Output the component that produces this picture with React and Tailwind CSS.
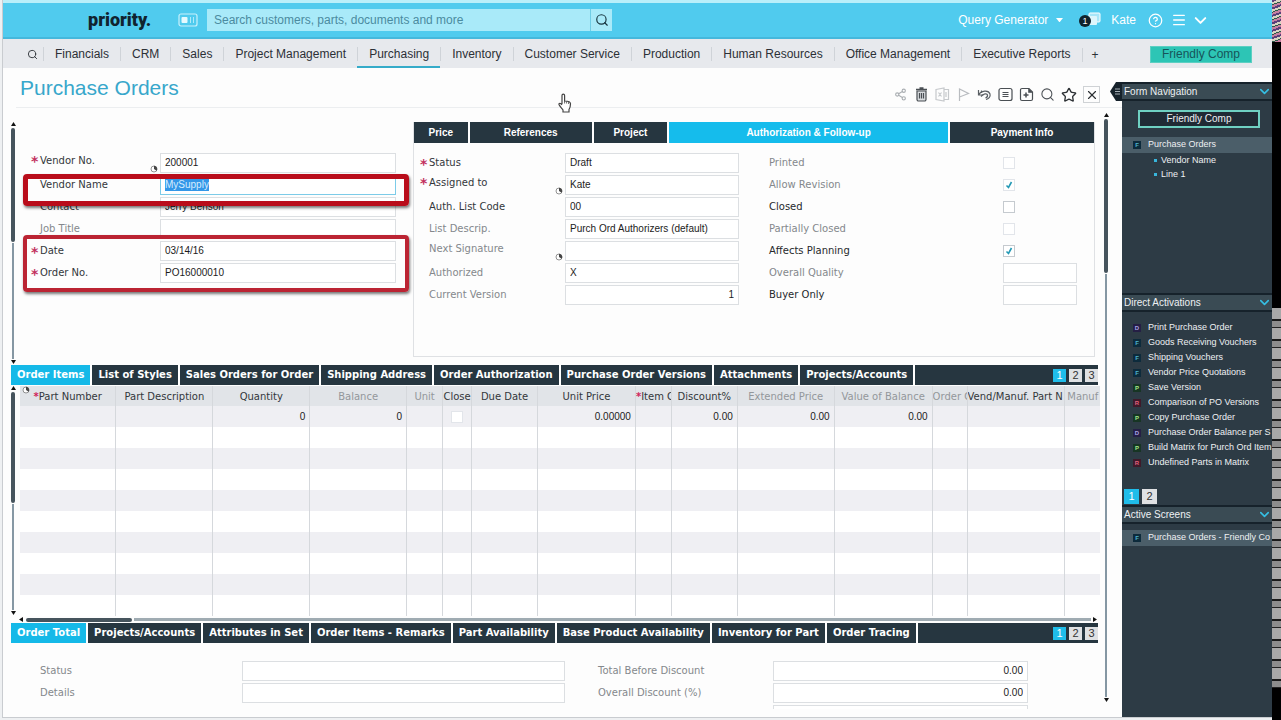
import { useId } from 'react'
import clsx      from 'clsx'
import { Search, Share2, Star, X, ChevronDown, CircleHelp, Menu } from 'lucide-react'

const MODULES = [
  'Financials', 'CRM', 'Sales', 'Project Management', 'Purchasing', 'Inventory',
  'Customer Service', 'Production', 'Human Resources', 'Office Management', 'Executive Reports',
]

const ITEM_TABS = [
  'Order Items', 'List of Styles', 'Sales Orders for Order', 'Shipping Address',
  'Order Authorization', 'Purchase Order Versions', 'Attachments', 'Projects/Accounts',
]

const TOTAL_TABS = [
  'Order Total', 'Projects/Accounts', 'Attributes in Set', 'Order Items - Remarks',
  'Part Availability', 'Base Product Availability', 'Inventory for Part', 'Order Tracing',
]

const COLUMNS = [
  { name: 'Part Number', width: 96, required: true },
  { name: 'Part Description', width: 97 },
  { name: 'Quantity', width: 97, value: '0' },
  { name: 'Balance', width: 97, value: '0', muted: true },
  { name: 'Unit', width: 36, muted: true },
  { name: 'Close', width: 29, check: true },
  { name: 'Due Date', width: 66 },
  { name: 'Unit Price', width: 98, value: '0.00000' },
  { name: 'Item C', width: 36, required: true, cut: true },
  { name: 'Discount%', width: 66, value: '0.00' },
  { name: 'Extended Price', width: 97, value: '0.00', muted: true },
  { name: 'Value of Balance', width: 98, value: '0.00', muted: true },
  { name: 'Order C', width: 35, muted: true, cut: true },
  { name: 'Vend/Manuf. Part N', width: 98, cut: true },
  { name: 'Manuf', width: 35, muted: true },
]

const ACTIVATIONS = [
  ['D', 'Print Purchase Order'],
  ['F', 'Goods Receiving Vouchers'],
  ['F', 'Shipping Vouchers'],
  ['F', 'Vendor Price Quotations'],
  ['P', 'Save Version'],
  ['R', 'Comparison of PO Versions'],
  ['P', 'Copy Purchase Order'],
  ['D', 'Purchase Order Balance per S'],
  ['P', 'Build Matrix for Purch Ord Item'],
  ['R', 'Undefined Parts in Matrix'],
]

const KIND_COLORS = {
  D: 'bg-[#251f45] text-[#a9a2e6]',
  F: 'bg-[#0d2b3c] text-[#4fb4cf]',
  P: 'bg-[#173524] text-[#a5ea8a]',
  R: 'bg-[#3f1a2a] text-[#e0607c]',
}

const LABEL_FONT = "font-['DejaVu_Sans',Verdana,sans-serif]"

// Small pie-clock shown beside fields that keep a history
function ClockMark() {
  return (
    <svg viewBox="0 0 8 8" className="size-2 shrink-0" aria-hidden="true">
      <circle cx="4" cy="4" r="3" fill="#fff" stroke="#777" strokeWidth=".8" />
      <path d="M4 4V.8A3.2 3.2 0 0 1 6.6 5.8Z" fill="#444" />
    </svg>
  )
}

function Arrow({ dir, className }) {
  const paths = {
    up: 'M0 4 2.500 0 5 4Z',
    down: 'M0 0 2.500 4 5 0Z',
    left: 'M4 0 0 2.500 4 5Z',
    right: 'M0 0 4 2.500 0 5Z',
  }
  return (
    <svg viewBox="0 0 5 5" className={clsx('size-[5px] shrink-0', className)} aria-hidden="true">
      <path d={paths[dir]} fill="#111" />
    </svg>
  )
}

function VScroll({ thumb }) {
  return (
    <div className="flex w-1 shrink-0 flex-col items-center gap-px">
      <Arrow dir="up" />
      <div className={clsx('w-1 shrink-0 rounded-full bg-[#46545d]', thumb)} />
      <div className="w-0.5 flex-1 bg-[#8597a3]" />
      <Arrow dir="down" />
    </div>
  )
}

function Field({ label, value = '', required, muted, clock, focused, right, labelWidth, wide = 'flex-1' }) {
  const id = useId()
  return (
    <div className="flex h-[22px] items-start">
      <span className={clsx('w-[9px] shrink-0 text-[14px] font-bold text-[#c2315f]', clock ? 'leading-[17px]' : 'leading-[22px]')}>
        {required && '*'}
      </span>
      <div className={clsx('flex h-5 shrink-0 justify-between pr-0.5', labelWidth)}>
        <label
          htmlFor={id}
          className={clsx('whitespace-nowrap text-[10px]', clock ? 'leading-[15px]' : 'leading-5', muted ? 'text-[#84888c]' : 'text-[#33373b]')}
        >
          {label}
        </label>
        {clock && <span className="self-end"><ClockMark /></span>}
      </div>
      <div className={clsx('flex h-5 min-w-0 items-center border bg-white', wide, focused ? 'border-[#7ccbe8]' : 'border-[#dcdfe2]')}>
        <input
          id={id}
          defaultValue={value}
          className={clsx(
            "min-w-0 font-['Liberation_Sans',Arial,sans-serif] text-[10px] leading-3 text-[#1c1c1c] outline-none",
            right ? 'w-full pr-1 text-right' : 'ml-1',
            focused ? 'field-sizing-content bg-[#3397e8] text-[#d6ecff]' : 'w-full',
          )}
        />
      </div>
    </div>
  )
}

function CheckBox({ id, label, checked, muted }) {
  return (
    <span className="relative flex size-3">
      <input
        id={id}
        type="checkbox"
        aria-label={label}
        defaultChecked={checked}
        className={clsx('peer size-3 appearance-none border bg-white', muted ? 'border-[#e2e5ea]' : 'border-[#c5cacf]')}
      />
      <svg viewBox="0 0 12 12" className="pointer-events-none absolute inset-0 hidden size-3 peer-checked:block" aria-hidden="true">
        <path d="M3.500 6.500 5.500 8.500 8.500 3" fill="none" stroke="#2499b5" strokeWidth="1.600" />
      </svg>
    </span>
  )
}

function FlagRow({ label, checked, muted, box }) {
  const id = useId()
  return (
    <div className="flex h-[22px] items-start">
      <label htmlFor={id} className={clsx('flex-1 text-[10px] leading-5', muted ? 'text-[#84888c]' : 'text-[#26292c]')}>
        {label}
      </label>
      <div className="flex h-5 w-[74px] items-center">
        {box
          ? <input id={id} className="h-5 w-full border border-[#dcdfe2] bg-white px-1 text-[10px] outline-none" />
          : <CheckBox id={id} checked={checked} muted={muted} />
        }
      </div>
    </div>
  )
}

function Pager({ pages }) {
  return (
    <div className="flex gap-[3px] font-['Liberation_Sans',Arial,sans-serif]">
      {pages.map((p, i) => (
        <button
          key={p}
          className={clsx('h-[13px] w-[13px] text-[11px] leading-[13px]', i === 0 ? 'bg-[#1fbdea] text-white' : 'bg-[#dfe1e3] text-[#333]')}
        >
          {p}
        </button>
      ))}
    </div>
  )
}

function TabStrip({ tabs }) {
  return (
    <div className="mr-0.5 flex h-5 items-center bg-[#263640]">
      {tabs.map((t, i) => (
        <button
          key={t}
          className={clsx(
            'h-5 whitespace-nowrap border-r-2 border-white px-[6px] text-[10px] font-bold leading-5 text-white',
            i === 0 ? 'bg-[#15b9e8]' : 'bg-[#263640]',
          )}
        >
          {t}
        </button>
      ))}
      <div className="ml-auto">
        <Pager pages={[1, 2, 3]} />
      </div>
    </div>
  )
}

function TopBar() {
  return (
    <header className="flex h-[39px] shrink-0 items-center border-b-2 border-t-[3px] border-b-[#45b8dc] border-t-[#b9effa] bg-[#50cbee] pl-[85px] pr-[62px] text-white">
      <a href="#home" className="w-[66px] font-['Roboto',sans-serif] text-[18px] font-black leading-5 text-[#10232f]">priority.</a>
      <svg viewBox="0 0 20 14" className="ml-6 h-3.5 w-5" fill="none" stroke="#c8f1fc" aria-hidden="true">
        <rect x="1" y="1" width="18" height="12" rx="2" strokeWidth="1.200" />
        <rect x="3.500" y="4" width="6" height="6" rx="1" fill="#e6fafe" stroke="none" />
        <path d="M12.500 4v6M15.500 4v6" strokeWidth=".8" />
      </svg>
      <form className="ml-[9px] flex h-[22px] w-[405px] bg-[#a9eaf9]">
        <input
          aria-label="Search"
          placeholder="Search customers, parts, documents and more"
          className="flex-1 px-[7px] text-[12px] text-[#39788d] outline-none placeholder:text-[#4b8ba0]"
        />
        <button type="button" aria-label="Find" className="flex w-[22px] items-center justify-center border-l border-[#6fcde6]">
          <Search size={14} className="text-[#18353f]" />
        </button>
      </form>
      <div className="ml-auto flex items-center text-[12px]">
        <button className="flex items-center gap-2">
          Query Generator
          <svg viewBox="0 0 8 5" className="w-[7px]" aria-hidden="true"><path d="M0 0h8L4 5Z" fill="#fff" /></svg>
        </button>
        <button aria-label="Messages" className="ml-[15px] flex items-center">
          <svg viewBox="0 0 24 16" className="h-4 w-6" aria-hidden="true">
            <rect x="11" y="1" width="11" height="9" rx="1" fill="#a8e6f8" stroke="#fff" />
            <rect x="9" y="4" width="10" height="9" rx="1" fill="#dff6fc" />
            <circle cx="7" cy="9" r="6" fill="#10222c" />
            <text x="7" y="12" textAnchor="middle" fontSize="9" fill="#fff">1</text>
          </svg>
        </button>
        <button className="ml-[9px]">Kate</button>
        <button aria-label="Help" className="ml-3"><CircleHelp size={15} /></button>
        <button aria-label="Menu" className="ml-2"><Menu size={16} /></button>
        <button aria-label="More" className="ml-1"><ChevronDown size={19} strokeWidth={2.5} /></button>
      </div>
    </header>
  )
}

function ModuleNav() {
  return (
    <nav className="flex h-[29px] shrink-0 items-center bg-[#e7e9ed] pl-6 pr-5 pt-0.5 text-[12px] text-[#2c3036]">
      <button aria-label="Find module" className="pr-[5px]"><Search size={11} /></button>
      {MODULES.map(m => (
        <a
          key={m}
          href="#module"
          className={clsx('flex h-full items-center whitespace-nowrap border-b-2', m === 'Purchasing' ? 'border-[#35abc9]' : 'border-transparent')}
        >
          <span className="border-l border-[#cfd3d8] px-[11px] leading-[14px]">{m}</span>
        </a>
      ))}
      <button aria-label="Add module" className="border-l border-[#cfd3d8] pl-[9px] leading-[14px]">+</button>
      <button className="ml-auto h-[17px] w-[102px] border border-[#5ccfc2] bg-[#2dc5b5] leading-[15px] text-[#17545a]">
        Friendly Comp
      </button>
    </nav>
  )
}

function ToolIcon({ label, className, children }) {
  return (
    <button aria-label={label} className={className}>
      <svg viewBox="0 0 15 15" className="size-[15px]" fill="none" stroke="currentColor" strokeWidth="1.200">
        {children}
      </svg>
    </button>
  )
}

function Toolbar() {
  return (
    <div className="flex items-center gap-[6px] text-[#4a4f54]">
      <button aria-label="Share"><Share2 size={13} className="mx-px text-[#aaaeb2]" /></button>
      <ToolIcon label="Delete">
        <path d="M3 4h9v8.500a1.500 1.500 0 0 1-1.500 1.500h-6A1.500 1.500 0 0 1 3 12.500Z" fill="#d9dcdf" />
        <path d="M2 2.500h11M5.500 1h4" strokeWidth="1.600" />
        <path d="M5.500 6v5.500M7.500 6v5.500M9.500 6v5.500" />
      </ToolIcon>
      <ToolIcon label="Export to spreadsheet" className="text-[#c6c9cc]">
        <path d="M1 2.500 9 1v13l-8-1.500ZM9 2.500h4.500v10H9M11 5v5M3.500 5.500l3 4M6.500 5.500l-3 4" />
      </ToolIcon>
      <ToolIcon label="Flag" className="text-[#b9bcc0]">
        <path d="M3.500 14V2L12.500 6.500 3.500 10" />
      </ToolIcon>
      <ToolIcon label="Undo" className="text-[#5a5f64]">
        <path d="M1.500 3v5h5M1.500 8C4 3.500 11.500 2.500 13 7c.8 3-1.500 5-4 5.500" />
        <path d="M4.500 3.500v2.500M4 9.500c2.500-3 6-3.500 6.500-1.500.3 1.500-.8 2.500-2 3" />
      </ToolIcon>
      <ToolIcon label="List view">
        <rect x="1" y="1.500" width="13" height="12" rx="2" />
        <path d="M4.500 5.500h6M4.500 7.500h6M4.500 9.500h6" />
      </ToolIcon>
      <ToolIcon label="New record">
        <path d="M3 1.500h7l3.500 3.500v7a1.500 1.500 0 0 1-1.500 1.500H3A1.500 1.500 0 0 1 1.500 12V3A1.500 1.500 0 0 1 3 1.500Z" />
        <path d="M9.500 1.500 13.500 5.500h-4Z" fill="currentColor" strokeWidth=".6" />
        <path d="M7 5.500v5M4.500 8h5" strokeWidth="1.500" />
      </ToolIcon>
      <button aria-label="Search form"><Search size={15} strokeWidth={1.7} /></button>
      <button aria-label="Favorite"><Star size={16} className="text-[#2c3034]" /></button>
      <button aria-label="Close" className="flex size-[17px] items-center justify-center border border-[#cfd2d5]">
        <X size={14} className="text-[#2c3034]" />
      </button>
    </div>
  )
}

function VendorForm() {
  return (
    <div className="relative flex">
      <VScroll thumb="h-[114px]" />
      <div className={clsx('ml-4 mr-[17px] flex-1 pt-[31px]', LABEL_FONT)}>
        <Field labelWidth="w-[120px]" label="Vendor No." value="200001" required clock />
        <Field labelWidth="w-[120px]" label="Vendor Name" value="MySupply" focused />
        <Field labelWidth="w-[120px]" label="Contact" value="Jerry Benson" />
        <Field labelWidth="w-[120px]" label="Job Title" muted />
        <Field labelWidth="w-[120px]" label="Date" value="03/14/16" required />
        <Field labelWidth="w-[120px]" label="Order No." value="PO16000010" required />
      </div>
      {/* Callout frames drawn over the form */}
      <div className="pointer-events-none absolute left-3 right-1 top-[52px] h-8 rounded-sm border-[5px] border-[#b90d1b] shadow-[1px_2px_3px_#0008]" />
      <div className="pointer-events-none absolute left-3 right-1 top-[113px] h-[57px] rounded-sm border-4 border-[#bb2433] shadow-[1px_2px_3px_#0008]" />
    </div>
  )
}

function DetailPanel() {
  return (
    <div className="mb-2 mr-[5px] h-[235px] border border-t-0 border-[#dfe1e4]">
      <div className="grid h-[21px] grid-cols-[54fr_123fr_74fr_281fr_145fr] gap-0.5 text-[10px] font-bold text-white">
        {['Price', 'References', 'Project', 'Authorization & Follow-up', 'Payment Info'].map(t => (
          <button key={t} className={t.startsWith('Auth') ? 'bg-[#15bcec]' : 'bg-[#263640]'}>{t}</button>
        ))}
      </div>
      <div className={clsx('grid grid-cols-[319fr_308fr] gap-[30px] pl-[6px] pr-[17px] pt-[10px]', LABEL_FONT)}>
        <div>
          <Field labelWidth="w-[136px]" label="Status" value="Draft" required />
          <Field labelWidth="w-[136px]" label="Assigned to" value="Kate" required clock />
          <Field labelWidth="w-[136px]" label="Auth. List Code" value="00" />
          <Field labelWidth="w-[136px]" label="List Descrip." value="Purch Ord Authorizers (default)" muted />
          <Field labelWidth="w-[136px]" label="Next Signature" muted clock />
          <Field labelWidth="w-[136px]" label="Authorized" value="X" muted />
          <Field labelWidth="w-[136px]" label="Current Version" value="1" muted right />
        </div>
        <div>
          <FlagRow label="Printed" muted />
          <FlagRow label="Allow Revision" checked muted />
          <FlagRow label="Closed" />
          <FlagRow label="Partially Closed" muted />
          <FlagRow label="Affects Planning" checked />
          <FlagRow label="Overall Quality" muted box />
          <FlagRow label="Buyer Only" box />
        </div>
      </div>
    </div>
  )
}

function ItemsTable() {
  return (
    <div className="mt-px flex">
      <VScroll thumb="h-[111px]" />
      <div className="relative ml-[5px] min-w-0 flex-1">
        <table className="w-full table-fixed border-collapse text-[10px]">
          <colgroup>
            {COLUMNS.map(c => <col key={c.name} style={{ width: `${c.width / 10.81}%` }} />)}
          </colgroup>
          <thead>
            <tr className={clsx('h-5 bg-[#e1e4e8]', LABEL_FONT)}>
              {COLUMNS.map(c => (
                <th
                  key={c.name}
                  className={clsx(
                    'overflow-hidden whitespace-nowrap border-r border-[#d5d8dc] p-0 font-normal last:border-r-0',
                    c.cut && 'text-left',
                    c.muted ? 'text-[#93979b]' : 'text-[#33373b]',
                  )}
                >
                  {c.required && <span className="font-bold text-[#d0245c]">*</span>}
                  {c.name}
                </th>
              ))}
            </tr>
          </thead>
          <tbody>
            {Array.from({ length: 10 }, (_, row) => (
              <tr key={row} className="h-[21px] odd:bg-[#efeff3] even:bg-white">
                {COLUMNS.map(c => (
                  <td key={c.name} className="border-r border-[#d5d8dc] p-0 pr-1 text-right text-[#1c1c1c] last:border-r-0">
                    {row === 0 && c.value}
                    {row === 0 && c.check && <span className="flex justify-center pl-1"><CheckBox label="Close line" muted /></span>}
                  </td>
                ))}
              </tr>
            ))}
          </tbody>
        </table>
        <span className="absolute left-0.5 top-0"><ClockMark /></span>
      </div>
    </div>
  )
}

function SideHeader({ children }) {
  return (
    <h2 className="flex h-[19px] items-center justify-between border-y-2 border-[#16222b] bg-[#3a4b54] pl-0.5 text-[10px]">
      {children}
      <ChevronDown size={15} strokeWidth={2.5} className="shrink-0 text-[#35bfe4]" />
    </h2>
  )
}

function Kind({ kind }) {
  return (
    <span className={clsx('flex size-2 shrink-0 items-center justify-center text-[6px] font-bold leading-none', KIND_COLORS[kind])}>
      {kind}
    </span>
  )
}

function Sidebar() {
  return (
    <aside className="relative mt-[14px] flex w-[150px] shrink-0 flex-col bg-[#2d3b45] text-[10px] text-[#eef1f3]">
      <button aria-label="Collapse navigation" className="absolute -left-3 top-0 h-[19px] w-3">
        <svg viewBox="0 0 12 19" className="h-[19px] w-3" aria-hidden="true">
          <path d="M12 0H6L0 9.500 6 19h6Z" fill="#16222b" />
          <path d="M5 7h5M5 9.500h5M5 12h5" stroke="#b7c0c6" strokeWidth=".9" />
        </svg>
      </button>
      <section className="h-[211px]">
        <SideHeader>Form Navigation</SideHeader>
        <button className="ml-4 mt-[9px] block h-[18px] w-[122px] border-2 border-[#6fd0c2] bg-[#202b35] leading-[14px]">
          Friendly Comp
        </button>
        <div className="mt-[9px] flex h-4 items-center gap-[7px] bg-[#4b5e69] pl-[11px] text-[9px]">
          <Kind kind="F" />
          Purchase Orders
        </div>
        <ul className="pl-8 text-[9px] leading-[14px]">
          {['Vendor Name', 'Line 1'].map(t => (
            <li key={t} className="flex items-center gap-1">
              <span className="size-[3px] bg-[#38b6dc]" />
              {t}
            </li>
          ))}
        </ul>
      </section>
      <section>
        <SideHeader>Direct Activations</SideHeader>
        <ul className="overflow-hidden pt-2 text-[9px] leading-[15px]">
          {ACTIVATIONS.map(([kind, name]) => (
            <li key={name} className="flex items-center gap-[7px] whitespace-nowrap pl-[11px]">
              <Kind kind={kind} />
              <a href="#activate">{name}</a>
            </li>
          ))}
        </ul>
        <div className="flex gap-[3px] pb-px pl-0.5 pt-[19px]">
          <button className="size-[15px] bg-[#1fbdea] text-[11px] leading-[15px] text-white">1</button>
          <button className="size-[15px] bg-[#dfe1e3] text-[11px] leading-[15px] text-[#333]">2</button>
        </div>
      </section>
      <section>
        <SideHeader>Active Screens</SideHeader>
        <div className="mt-[6px] flex h-4 items-center gap-[7px] overflow-hidden whitespace-nowrap bg-[#4b5e69] pl-[11px] text-[9px]">
          <Kind kind="F" />
          Purchase Orders - Friendly Co
        </div>
      </section>
    </aside>
  )
}

export default function App() {
  return (
    <div className="flex h-screen overflow-hidden bg-[#eef0f2] font-['Liberation_Sans',Arial,sans-serif]">
      <div className="mb-0.5 ml-0.5 flex min-w-0 flex-1 flex-col border-b border-l border-[#c9ccd0] bg-[#fdfdfd]">
        <TopBar />
        <ModuleNav />
        <div className="flex min-h-0 flex-1">
          <main className="flex min-w-0 flex-1 flex-col">
            <div className="relative ml-[13px] flex h-10 shrink-0 items-center justify-between border-b border-[#eceef0] pl-1 pr-[22px]">
              <h1 className="text-[21px] leading-10 text-[#38a7cb]">Purchase Orders</h1>
              <div className="self-end pb-1">
                <Toolbar />
              </div>
              {/* Hand pointer */}
              <svg viewBox="0 0 14 20" className="absolute left-[49%] top-[25px] h-5 w-3.5" aria-hidden="true">
                <path d="M4 11V2.500a1.300 1.300 0 0 1 2.600 0V8c2 0 5.900.3 5.900 2.800 0 3-.5 4.200-1.500 5.700V19H5v-2C3.500 15 1.500 13 1 11.500c-.3-1.300 1.500-1.800 3 .5" fill="#fff" stroke="#444" strokeWidth="1.200" />
                <path d="M6.600 8v2.500M8.600 8.500v2M10.600 9v2" stroke="#444" strokeWidth=".8" />
              </svg>
            </div>
            <div className="flex min-h-0 flex-1">
              <div className="ml-2 flex min-w-0 flex-1 flex-col">
                <div className="mt-[14px] grid grid-cols-[402fr_687fr]">
                  <VendorForm />
                  <DetailPanel />
                </div>
                <div className={LABEL_FONT}><TabStrip tabs={ITEM_TABS} /></div>
                <ItemsTable />
                <div className="mr-0.5 flex h-[7px] items-center gap-0.5 pl-2">
                  <Arrow dir="left" />
                  <div className="h-1 w-[106px] rounded-full bg-[#46545d]" />
                  <div className="h-[3px] flex-1 bg-[#9fabb2]" />
                  <Arrow dir="right" />
                </div>
                <div className={LABEL_FONT}><TabStrip tabs={TOTAL_TABS} /></div>
                <div className={clsx('mb-2 grid min-h-0 flex-1 grid-cols-[534fr_430fr] gap-[33px] overflow-hidden pl-5 pr-[72px] pt-[18px]', LABEL_FONT)}>
                  <div>
                    <Field labelWidth="w-[202px]" label="Status" muted />
                    <Field labelWidth="w-[202px]" label="Details" muted />
                  </div>
                  <div className="-ml-[9px]">
                    <Field labelWidth="w-[175px]" label="Total Before Discount" value="0.00" muted right />
                    <Field labelWidth="w-[175px]" label="Overall Discount (%)" value="0.00" muted right />
                    <Field labelWidth="w-[175px]" label="" muted right />
                  </div>
                </div>
              </div>
              <div className="mb-[14px] mt-[5px] flex w-[22px] pl-1">
                <VScroll thumb="h-[154px]" />
              </div>
            </div>
          </main>
          <Sidebar />
        </div>
      </div>
      {/* Screen edge: colour noise, black band, grey scan lines */}
      <div className="flex w-[9px] shrink-0 flex-col bg-black">
        <div className="h-[42px] bg-[repeating-linear-gradient(160deg,#5b3f7a_0_2px,#d8d2c0_2px_4px,#2c5b4a_4px_5px,#c77fa0_5px_7px)]" />
        <div className="h-[266px]" />
        <div className="h-[380px] bg-[repeating-linear-gradient(180deg,#a8a8a8_0_11px,#1a1a1a_11px_13px,#8c8c8c_13px_19px,#222_19px_20px)]" />
      </div>
    </div>
  )
}
